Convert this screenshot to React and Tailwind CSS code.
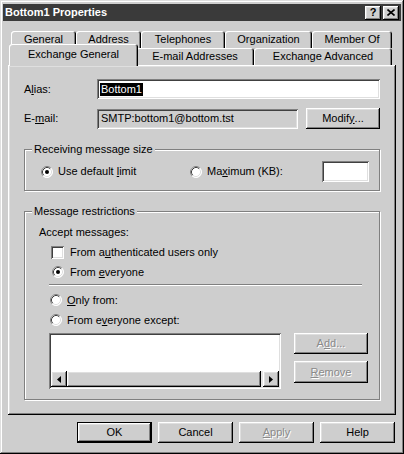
import React from "react";

const raised =
  "shadow-[inset_-1px_-1px_#000,inset_1px_1px_#fff,inset_-2px_-2px_#808080,inset_2px_2px_#dfdfdf]";
const sunken =
  "shadow-[inset_1px_1px_#808080,inset_-1px_-1px_#fff,inset_2px_2px_#404040,inset_-2px_-2px_#dfdfdf]";

function Radio({ checked }) {
  return (
    <svg width="12" height="12" viewBox="0 0 12 12" className="shrink-0">
      <circle cx="6" cy="6" r="5.5" fill="#fff" />
      <path d="M2.11 9.89 A5.5 5.5 0 0 1 9.89 2.11" stroke="#808080" fill="none" />
      <path d="M9.89 2.11 A5.5 5.5 0 0 1 2.11 9.89" stroke="#ffffff" fill="none" />
      <path d="M2.82 9.18 A4.5 4.5 0 0 1 9.18 2.82" stroke="#404040" fill="none" />
      <path d="M9.18 2.82 A4.5 4.5 0 0 1 2.82 9.18" stroke="#dfdfdf" fill="none" />
      {checked && <circle cx="6" cy="6" r="2" fill="#000" />}
    </svg>
  );
}

function U({ children }) {
  return <span className="underline underline-offset-[1px]">{children}</span>;
}

function Tab({ w, children, selected }) {
  return (
    <div
      className={
        "flex items-center justify-center rounded-t-[3px] bg-[#cecece] shadow-[inset_1px_1px_#fff,inset_-1px_0_#000,inset_-2px_0_#808080] " +
        w +
        (selected ? " relative z-10 -mt-[4px] -mx-[2px] h-[22px] pb-[2px]" : " h-[17px]")
      }
    >
      {children}
    </div>
  );
}

function Btn({ children, disabled, isDefault, className = "" }) {
  const inner = (
    <div
      className={
        "flex h-full w-full items-center justify-center bg-[#cecece] " +
        raised +
        (disabled ? " text-[#8a8a8a] [text-shadow:1px_1px_#fff]" : "")
      }
    >
      {children}
    </div>
  );
  if (isDefault) {
    return <div className={"border border-black " + className}>{inner}</div>;
  }
  return <div className={className}>{inner}</div>;
}

function ArrowBtn({ dir }) {
  return (
    <div className={"flex h-[16px] w-[16px] shrink-0 items-center justify-center bg-[#cecece] " + raised}>
      <svg width="4" height="7" viewBox="0 0 4 7">
        {dir === "left" ? <path d="M4 0 L0 3.5 L4 7 Z" fill="#000" /> : <path d="M0 0 L4 3.5 L0 7 Z" fill="#000" />}
      </svg>
    </div>
  );
}

export default function App() {
  return (
    <div
      className="flex h-[454px] w-[404px] flex-col whitespace-nowrap bg-[#cecece] px-[3px] pt-[4px] text-[11px] leading-[13px] text-black shadow-[inset_-1px_-1px_#000,inset_1px_1px_#dfdfdf,inset_-2px_-2px_#808080,inset_2px_2px_#fff]"
      style={{ fontFamily: '"Liberation Sans", Arial, sans-serif' }}
    >
      {/* Title bar */}
      <div className="flex h-[17px] items-center justify-between bg-[#3a3a3a] pl-[2px] pr-[2px]">
        <span className="font-bold text-white">Bottom1 Properties</span>
        <div className="flex gap-[2px]">
          <div className={"flex h-[14px] w-[16px] items-center justify-center bg-[#cecece] text-[11px] font-bold " + raised}>
            ?
          </div>
          <div className={"flex h-[14px] w-[16px] items-center justify-center bg-[#cecece] " + raised}>
            <svg width="8" height="7" viewBox="0 0 8 7">
              <path d="M0.5 0.5 L7.5 6.5 M7.5 0.5 L0.5 6.5" stroke="#000" strokeWidth="1.6" />
            </svg>
          </div>
        </div>
      </div>

      {/* Tabs row 1 */}
      <div className="ml-[8px] mt-[10px] flex">
        <Tab w="w-[65px]">General</Tab>
        <Tab w="w-[65px]">Address</Tab>
        <Tab w="w-[84px]">Telephones</Tab>
        <Tab w="w-[87px]">Organization</Tab>
        <Tab w="w-[80px]">Member Of</Tab>
      </div>
      {/* Tabs row 2 */}
      <div className="ml-[8px] flex h-[17px] items-start">
        <Tab w="w-[129px]" selected>
          Exchange General
        </Tab>
        <Tab w="w-[118px]">E-mail Addresses</Tab>
        <Tab w="w-[138px]">Exchange Advanced</Tab>
      </div>

      {/* Panel */}
      <div className={"ml-[5px] flex h-[350px] w-[388px] flex-col px-[16px] " + raised}>
        {/* Alias */}
        <div className="mt-[14px] flex items-center">
          <span className="w-[73px]">
            A<U>l</U>ias:
          </span>
          <div className={"flex h-[20px] flex-1 items-center bg-white pl-[3px] " + sunken}>
            <span className="bg-black px-[1px] text-white">Bottom1</span>
          </div>
        </div>
        {/* E-mail */}
        <div className="mt-[9px] flex items-center">
          <span className="w-[73px]">
            E-<U>m</U>ail:
          </span>
          <div className={"flex h-[20px] w-[201px] items-center bg-[#cecece] pl-[4px] " + sunken}>
            SMTP:bottom1@bottom.tst
          </div>
          <Btn className="ml-[8px] h-[21px] w-[74px]">
            Modif<U>y</U>...
          </Btn>
        </div>

        {/* Receiving message size */}
        <fieldset className="mt-[14px] border border-[#808080] shadow-[inset_1px_1px_#fff,1px_1px_#fff]">
          <legend className="ml-[7px] bg-[#cecece] px-[2px] leading-[13px]">Receiving message size</legend>
          <div className="flex items-center pb-[8px] pl-[16px] pr-[10px] pt-[5px]">
            <div className="flex w-[149px] shrink-0 items-center">
              <Radio checked />
              <span className="ml-[5px]">
                Use default <U>l</U>imit
              </span>
            </div>
            <div className="flex shrink-0 items-center">
              <Radio />
              <span className="ml-[5px]">
                Ma<U>x</U>imum (KB):
              </span>
            </div>
            <div className={"ml-auto h-[21px] w-[47px] shrink-0 bg-white " + sunken} />
          </div>
        </fieldset>

        {/* Message restrictions */}
        <fieldset className="mt-[14px] border border-[#808080] shadow-[inset_1px_1px_#fff,1px_1px_#fff]">
          <legend className="ml-[7px] bg-[#cecece] px-[2px] leading-[13px]">Message restrictions</legend>
          <div className="flex flex-col pb-[10px] pl-[14px] pt-[4px]">
            <div className="flex h-[20px] items-center">Accept messages:</div>
            <div className="flex flex-col pl-[10px]">
              <div className="flex h-[20px] items-center pl-[2px]">
                <span className={"h-[13px] w-[13px] shrink-0 bg-white " + sunken} />
                <span className="ml-[6px]">
                  From a<U>u</U>thenticated users only
                </span>
              </div>
              <div className="flex h-[20px] items-center pl-[3px]">
                <Radio checked />
                <span className="ml-[6px]">
                  From <U>e</U>veryone
                </span>
              </div>
              <div className="mt-[2px] h-[2px] w-[313px] border-t border-[#808080] border-b border-b-white" />
              <div className="mt-[4px] flex h-[20px] items-center pl-[1px]">
                <Radio />
                <span className="ml-[5px]">
                  <U>O</U>nly from:
                </span>
              </div>
              <div className="flex h-[20px] items-center pl-[1px]">
                <Radio />
                <span className="ml-[5px]">
                  From e<U>v</U>eryone except:
                </span>
              </div>
              <div className="mt-[3px] flex items-start">
                <div className={"flex h-[56px] w-[232px] flex-col justify-end bg-white p-[2px] " + sunken}>
                  <div className="flex h-[16px] bg-[#e6e6e6]">
                    <ArrowBtn dir="left" />
                    <div className={"h-[16px] flex-1 bg-[#cecece] " + raised} />
                    <div className="w-[2px]" />
                    <ArrowBtn dir="right" />
                  </div>
                </div>
                <div className="ml-[13px] flex flex-col gap-[7px]">
                  <Btn disabled className="h-[21px] w-[74px]">
                    A<U>d</U>d...
                  </Btn>
                  <Btn disabled className="h-[22px] w-[74px]">
                    <U>R</U>emove
                  </Btn>
                </div>
              </div>
            </div>
          </div>
        </fieldset>
      </div>

      {/* Bottom buttons */}
      <div className="mt-[7px] flex justify-end gap-[6px] pr-[6px]">
        <Btn isDefault className="h-[21px] w-[75px]">
          OK
        </Btn>
        <Btn className="h-[21px] w-[75px]">Cancel</Btn>
        <Btn disabled className="h-[21px] w-[75px]">
          <U>A</U>pply
        </Btn>
        <Btn className="h-[21px] w-[75px]">Help</Btn>
      </div>
    </div>
  );
}
